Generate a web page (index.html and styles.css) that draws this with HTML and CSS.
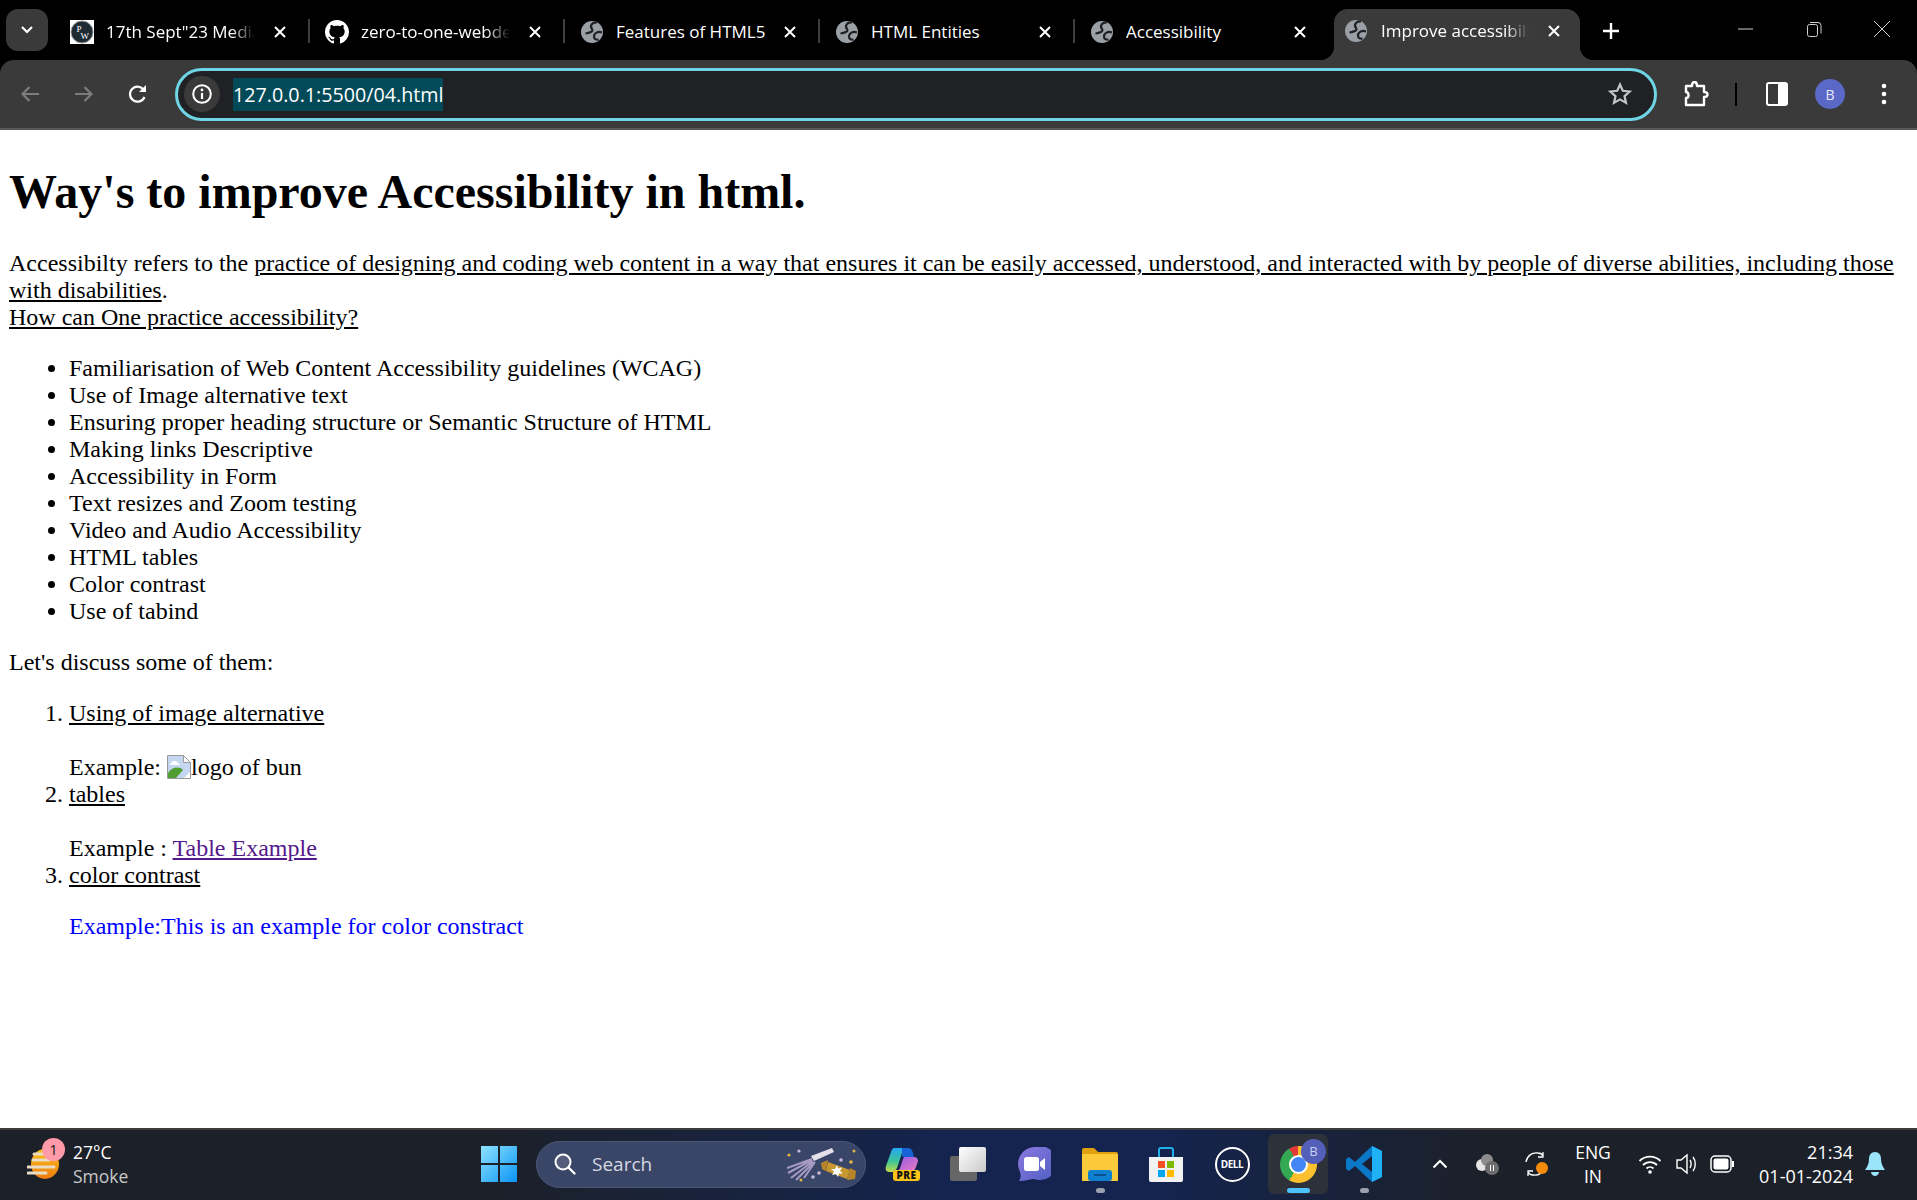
FILE: index.html
```html
<!DOCTYPE html>
<html lang="en">
<head>
    <meta charset="UTF-8">
    <title>Improve accessibility</title>
    <link rel="stylesheet" href="styles.css">
</head>
<body>
    <svg class="defs" width="0" height="0">
        <symbol id="globe" viewBox="0 0 24 24">
            <circle cx="12" cy="12" r="11" fill="#9aa0a6"/>
            <path d="M17 2.500C12 2 9.500 6 12 9c2 2.500-3 4-6.500 4.500M22 12.500c-4-1.500-8 .5-8 4 0 2.500 2 3.500 4.500 3" stroke="#202124" stroke-width="2.200" fill="none"/>
        </symbol>
        <symbol id="close" viewBox="0 0 14 14">
            <path d="M2 2l10 10M12 2L2 12" stroke="#fff" stroke-width="2" fill="none"/>
        </symbol>
    </svg>

    <div class="window">
        <div class="tabstrip">
            <div class="tab-search">
                <svg width="14" height="10" viewBox="0 0 14 10"><path d="M2 2l5 5 5-5" stroke="#fff" stroke-width="2.2" fill="none"/></svg>
            </div>

            <div class="tab">
                <span class="favicon pw"><svg width="24" height="24" viewBox="0 0 24 24"><circle cx="12" cy="12" r="11" fill="#1f2b33" stroke="#9a9a9a"/><text x="6.500" y="12" class="pw-letter">P</text><text x="10.500" y="18.500" class="pw-letter">W</text></svg></span>
                <span class="tab-title fade">17th Sept"23 Media</span>
                <svg class="tab-close"><use href="#close"/></svg>
            </div>
            <div class="tab">
                <span class="favicon"><svg width="24" height="24" viewBox="0 0 16 16"><path fill="#fff" d="M8 0C3.580 0 0 3.580 0 8c0 3.540 2.290 6.530 5.470 7.590.4.070.55-.17.55-.38 0-.19-.01-.82-.01-1.490-2.010.37-2.530-.49-2.690-.94-.09-.23-.48-.94-.82-1.130-.28-.15-.68-.52-.01-.53.63-.01 1.080.58 1.230.82.72 1.210 1.870.87 2.330.66.070-.52.28-.87.51-1.070-1.780-.2-3.640-.89-3.640-3.950 0-.87.31-1.590.82-2.150-.08-.2-.36-1.020.08-2.120 0 0 .67-.21 2.200.82.64-.18 1.320-.27 2-.27s1.360.09 2 .27c1.530-1.040 2.200-.82 2.200-.82.44 1.100.16 1.920.08 2.120.51.56.82 1.270.82 2.150 0 3.070-1.870 3.750-3.650 3.950.29.25.54.73.54 1.480 0 1.070-.01 1.930-.01 2.200 0 .21.15.46.55.38A8.010 8.010 0 0016 8c0-4.420-3.580-8-8-8z"/></svg></span>
                <span class="tab-title fade">zero-to-one-webdev</span>
                <svg class="tab-close"><use href="#close"/></svg>
            </div>
            <div class="tab">
                <span class="favicon"><svg width="24" height="24"><use href="#globe"/></svg></span>
                <span class="tab-title">Features of HTML5</span>
                <svg class="tab-close"><use href="#close"/></svg>
            </div>
            <div class="tab">
                <span class="favicon"><svg width="24" height="24"><use href="#globe"/></svg></span>
                <span class="tab-title">HTML Entities</span>
                <svg class="tab-close"><use href="#close"/></svg>
            </div>
            <div class="tab last">
                <span class="favicon"><svg width="24" height="24"><use href="#globe"/></svg></span>
                <span class="tab-title">Accessibility</span>
                <svg class="tab-close"><use href="#close"/></svg>
            </div>
            <div class="tab active">
                <span class="favicon"><svg width="24" height="24"><use href="#globe"/></svg></span>
                <span class="tab-title fade">Improve accessibility</span>
                <svg class="tab-close"><use href="#close"/></svg>
            </div>

            <svg class="new-tab" width="18" height="18" viewBox="0 0 18 18"><path d="M9 1v16M1 9h16" stroke="#fff" stroke-width="2.400"/></svg>

            <div class="window-controls">
                <svg width="16" height="16" viewBox="0 0 16 16"><path d="M0 8h15" stroke="#d0d0d0" stroke-width="1"/></svg>
                <svg width="16" height="16" viewBox="0 0 16 16"><rect x="1.500" y="3.500" width="10" height="12" rx="2" stroke="#d0d0d0" fill="none"/><path d="M4 1.500h8a3 3 0 013 3v8" stroke="#d0d0d0" fill="none"/></svg>
                <svg width="16" height="16" viewBox="0 0 16 16"><path d="M0 0l16 16M16 0L0 16" stroke="#d0d0d0"/></svg>
            </div>
        </div>

        <div class="toolbar">
            <svg class="nav-btn" width="20" height="18" viewBox="0 0 20 18"><path d="M19 9H3M9.500 2L2.500 9l7 7" stroke="#7c7c7c" stroke-width="2.200" fill="none"/></svg>
            <svg class="nav-btn" width="20" height="18" viewBox="0 0 20 18"><path d="M1 9h16M10.500 2l7 7-7 7" stroke="#7c7c7c" stroke-width="2.200" fill="none"/></svg>
            <svg class="nav-btn" width="20" height="20" viewBox="0 0 20 20"><path d="M16.500 13a7.500 7.500 0 11-.6-6.800" stroke="#fff" stroke-width="2.200" fill="none"/><path d="M18 1v7h-7z" fill="#fff"/></svg>

            <div class="omnibox">
                <div class="site-info">
                    <svg width="22" height="22" viewBox="0 0 22 22"><circle cx="11" cy="11" r="8.800" stroke="#fff" stroke-width="2" fill="none"/><path d="M11 10v6" stroke="#fff" stroke-width="2.200"/><circle cx="11" cy="7" r="1.400" fill="#fff"/></svg>
                </div>
                <span class="url">127.0.0.1:5500/04.html</span>
                <svg class="star" width="24" height="24" viewBox="0 0 24 24"><path d="M12 2.500l2.800 6.300 6.900.7-5.200 4.600 1.500 6.800-6-3.500-6 3.500 1.500-6.800-5.200-4.600 6.900-.7z" stroke="#c4c7c5" stroke-width="2.200" fill="none"/></svg>
            </div>

            <svg class="extensions" width="26" height="26" viewBox="0 0 26 26"><path d="M3 5h6c0-3 1-4 2.500-4S14 2 14 5h7v6c2 0 3.500 .5 3.500 2.500S23 16 21 16v8H3v-7c2 0 2.500-1 2.500-2.500S5 11 3 11z" stroke="#fff" stroke-width="2.400" fill="none" stroke-linejoin="round"/></svg>
            <span class="toolbar-sep"></span>
            <svg class="side-panel" width="22" height="24" viewBox="0 0 22 24"><rect x="1" y="1" width="20" height="22" rx="2" stroke="#fff" stroke-width="2" fill="none"/><rect x="12" y="1" width="9" height="22" fill="#fff"/></svg>
            <span class="avatar">B</span>
            <svg class="menu-dots" width="6" height="22" viewBox="0 0 6 22"><circle cx="3" cy="3" r="2.300" fill="#fff"/><circle cx="3" cy="11" r="2.300" fill="#fff"/><circle cx="3" cy="19" r="2.300" fill="#fff"/></svg>
        </div>

        <main class="page">
            <h1>Way's to improve Accessibility in html.</h1>
            <p>Accessibilty refers to the <u>practice of designing and coding web content in a way that ensures it can be easily accessed, understood, and interacted with by people of diverse abilities, including those with disabilities</u>.<br>
            <u>How can One practice accessibility?</u></p>
            <ul>
                <li>Familiarisation of Web Content Accessibility guidelines (WCAG)</li>
                <li>Use of Image alternative text</li>
                <li>Ensuring proper heading structure or Semantic Structure of HTML</li>
                <li>Making links Descriptive</li>
                <li>Accessibility in Form</li>
                <li>Text resizes and Zoom testing</li>
                <li>Video and Audio Accessibility</li>
                <li>HTML tables</li>
                <li>Color contrast</li>
                <li>Use of tabind</li>
            </ul>
            <p>Let's discuss some of them:</p>
            <ol>
                <li><u>Using of image alternative</u><br><br>
                    Example: <svg class="broken-img" width="24" height="24" viewBox="0 0 24 24">
                        <path d="M.5.500h16l7 7v16H.5z" fill="#c5d6f0" stroke="#9a9a9a"/>
                        <path d="M16.500.500v7h7z" fill="#fff" stroke="#9a9a9a"/>
                        <path d="M4 8c1-3 5-3 7 0 1 1 2 2 3 2H3z" fill="#fff"/>
                        <path d="M1 23v-5c4-6 11-7 15-3l-7 8z" fill="#4f9e2f"/>
                        <path d="M17 23l6-6v6z" fill="#fff"/>
                    </svg>logo of bun</li>
                <li><u>tables</u><br><br>
                    Example : <a class="visited" href="#">Table Example</a></li>
                <li><u>color contrast</u>
                    <p class="contrast">Example:This is an example for color constract</p></li>
            </ol>
        </main>

        <footer class="taskbar">
            <div class="weather">
                <div class="weather-icon">
                    <svg width="32" height="30" viewBox="0 0 32 30"><defs><linearGradient id="sun" x1="0" y1="0" x2="0" y2="1"><stop offset="0" stop-color="#fcc419"/><stop offset="1" stop-color="#ec7a10"/></linearGradient></defs><ellipse cx="18" cy="15" rx="14" ry="15" fill="url(#sun)"/><path d="M6 11h16M1 18h26M1 24h18M7 5h20" stroke="#e9dcc4" stroke-width="3" stroke-linecap="round"/></svg>
                    <span class="weather-badge">1</span>
                </div>
                <div class="weather-text">
                    <span>27°C</span>
                    <span class="weather-sub">Smoke</span>
                </div>
            </div>

            <svg class="start" width="36" height="36" viewBox="0 0 36 36">
                <defs><linearGradient id="win" x1="0" y1="0" x2="1" y2="1"><stop offset="0" stop-color="#8fe3ff"/><stop offset="1" stop-color="#0a94f5"/></linearGradient></defs>
                <path d="M0 0h17v17H0zM19 0h17v17H19zM0 19h17v17H0zM19 19h17v17H19z" fill="url(#win)"/>
            </svg>

            <div class="search-pill">
                <svg width="24" height="24" viewBox="0 0 24 24"><circle cx="10" cy="10" r="7.500" stroke="#fff" stroke-width="2" fill="#ffffff22"/><path d="M15.500 15.500l6 6" stroke="#fff" stroke-width="2.400" stroke-linecap="round"/></svg>
                <span class="search-label">Search</span>
                <svg class="search-art" width="70" height="35" viewBox="0 0 70 35">
                    <path d="M24 9L45 1l2 4-20 9z" fill="#e4dfe8"/>
                    <path d="M25 12L0 21M25 13L1 26M26 14L4 31M27 15L9 33M28 15L17 31" stroke="#a79bc4" stroke-width="2"/>
                    <path d="M41 15l22 8-3 9-21-8z" fill="#c9972f"/>
                    <path d="M34 16l7-3-2 11-4-2zM63 21l6 3-1 8-8 1z" fill="#b8842a"/>
                    <path d="M50 18l1 3.500 4-1-2 3.500 3 2.500-4 0-1 3.500-2-3-4 1 2-3.500-3-2.500 4 0z" fill="#fff"/>
                    <circle cx="12" cy="4" r="1.600" fill="#c8bcdc"/><circle cx="2" cy="8" r="1.600" fill="#e1b647"/><circle cx="67" cy="4" r="1.500" fill="#e1b647"/><circle cx="54" cy="13" r="1.800" fill="#c8bcdc"/><circle cx="64" cy="15" r="1.800" fill="#e1b647"/><circle cx="26" cy="30" r="1.800" fill="#c8bcdc"/><circle cx="32" cy="26" r="1.800" fill="#c8bcdc"/><circle cx="14" cy="33" r="1.500" fill="#e1b647"/>
                </svg>
            </div>

            <div class="apps">
                <div class="app">
                    <svg width="34" height="34" viewBox="0 0 34 34">
                        <defs>
                            <linearGradient id="cop" x1="0" y1="0" x2="0" y2="1"><stop offset="0" stop-color="#27a6f2"/><stop offset=".55" stop-color="#3cc49a"/><stop offset="1" stop-color="#c4dc46"/></linearGradient>
                            <linearGradient id="cop2" x1="0" y1="0" x2="1" y2="1"><stop offset="0" stop-color="#8f5be8"/><stop offset="1" stop-color="#f07bc0"/></linearGradient>
                        </defs>
                        <path d="M9 1h14c-3 0-5 2-6 5l-5 15c-1 2-3 4-5 4H4c-3 0-4-3-3-6L6 5c1-3 2-4 3-4z" fill="url(#cop)"/>
                        <path d="M17 1h6c3 0 4 2 5 5l1 5h-8c-2 0-4-1-4-3z" fill="#1763d6"/>
                        <path d="M20 10h9c3 0 4 2 4 4l-2 6c-1 3-3 5-6 5H11c2 0 3-2 4-4l3-9c.5-1 1-2 2-2z" fill="url(#cop2)"/>
                    </svg>
                    <span class="pre-label">PRE</span>
                </div>
                <div class="app"><svg width="36" height="34" viewBox="0 0 36 34"><defs><linearGradient id="tv" x1="0" y1="0" x2="1" y2="1"><stop offset="0" stop-color="#fff"/><stop offset="1" stop-color="#c9c9c9"/></linearGradient></defs><rect x="0" y="9" width="27" height="25" rx="2" fill="#666"/><rect x="9" y="0" width="27" height="25" rx="2" fill="url(#tv)"/></svg></div>
                <div class="app"><svg width="34" height="34" viewBox="0 0 34 34"><defs><linearGradient id="meet" x1="0" y1="0" x2="1" y2="1"><stop offset="0" stop-color="#8d78e0"/><stop offset="1" stop-color="#4d5fc2"/></linearGradient></defs><path d="M17 0a17 17 0 110 32c-3 0-8 2-15 2 2-3 2-6 1-9A17 17 0 0117 0z" fill="url(#meet)"/><rect x="7" y="10" width="15" height="14" rx="2.500" fill="#fff"/><path d="M23 15l5-4v12l-5-4z" fill="#fff"/></svg></div>
                <div class="app">
                    <svg width="36" height="33" viewBox="0 0 36 33"><path d="M0 2a2 2 0 012-2h10l4 4h18a2 2 0 012 2v4H0z" fill="#e0a010"/><path d="M0 6h36v27H0z" fill="#fcc93b"/><rect x="6" y="22" width="24" height="11" rx="3" fill="#0f7fd0"/><path d="M12 27h12" stroke="#0a4f90" stroke-width="2"/></svg>
                    <span class="app-dot"></span>
                </div>
                <div class="app"><svg width="36" height="36" viewBox="0 0 36 36"><path d="M1 11h34v23a2 2 0 01-2 2H3a2 2 0 01-2-2z" fill="#f2f2f2"/><path d="M11 11V4a2 2 0 012-2h10a2 2 0 012 2v7" stroke="#1fb0e8" stroke-width="2" fill="none"/><path d="M10 15h7v7h-7z" fill="#f25022"/><path d="M19 15h7v7h-7z" fill="#7fba00"/><path d="M10 24h7v7h-7z" fill="#00a4ef"/><path d="M19 24h7v7h-7z" fill="#ffb900"/></svg></div>
                <div class="app"><div class="dell">DELL</div></div>
                <div class="app current">
                    <div class="chrome-logo"><span class="chrome-core"></span></div>
                    <span class="chrome-badge">B</span>
                    <span class="app-bar"></span>
                </div>
                <div class="app">
                    <svg width="36" height="36" viewBox="0 0 36 36"><path d="M26 0L9 16l-6-5-3 2v10l3 2 6-5 17 16 10-5V5z" fill="#0a78c8"/><path d="M26 0l10 5v26l-10 5z" fill="#1fb0f5"/><path d="M26 10l-10 8 10 8z" fill="#1b2030"/></svg>
                    <span class="app-dot"></span>
                </div>
            </div>

            <div class="tray">
                <svg class="tray-chevron" width="16" height="10" viewBox="0 0 16 10"><path d="M1.500 8.500L8 2l6.500 6.500" stroke="#fff" stroke-width="2" fill="none"/></svg>
                <svg class="tray-cloud" width="26" height="22" viewBox="0 0 26 22"><circle cx="8" cy="12" r="6" fill="#e6e6e6"/><circle cx="13" cy="7" r="6" fill="#8c8c8c"/><circle cx="18" cy="15" r="7" fill="#6e6e6e"/><path d="M16.500 12v6M19.500 12v6" stroke="#fff"/></svg>
                <svg class="tray-sync" width="26" height="26" viewBox="0 0 26 26"><path d="M3 11C4 5 9 1 15 2c2 0 4 1 5 3M20 1v5h-5M22 15c-1 6-6 10-12 9-2 0-4-1-5-3M5 25v-5h5" stroke="#fff" stroke-width="1.300" fill="none"/><circle cx="19" cy="17" r="6" fill="#f58a0b"/></svg>
                <div class="tray-lang"><span>ENG</span><span>IN</span></div>
                <svg class="tray-wifi" width="24" height="20" viewBox="0 0 24 20"><path d="M1.500 7a15 15 0 0121 0M5 11a10 10 0 0114 0M8.500 14.500a5 5 0 017 0" stroke="#fff" stroke-width="1.800" fill="none"/><circle cx="12" cy="18" r="1.800" fill="#fff"/></svg>
                <svg class="tray-volume" width="24" height="24" viewBox="0 0 24 24"><path d="M2 8h4l6-5v18l-6-5H2z" stroke="#fff" stroke-width="1.400" fill="none"/><path d="M15 8c1.500 2 1.500 6 0 8M18 5c3 4 3 10 0 14" stroke="#fff" stroke-width="1.400" fill="none"/></svg>
                <svg class="tray-battery" width="24" height="18" viewBox="0 0 24 18"><rect x="1" y="1" width="20" height="16" rx="4" stroke="#fff" stroke-width="1.500" fill="none"/><rect x="3.500" y="3.500" width="15" height="11" rx="2" fill="#fff"/><rect x="22" y="6" width="2" height="6" fill="#fff"/></svg>
                <div class="tray-clock"><span>21:34</span><span>01-01-2024</span></div>
                <svg class="tray-bell" width="20" height="26" viewBox="0 0 20 26"><path d="M10 1c4 0 6 3 6 7 0 5 2 8 4 11H0c2-3 4-6 4-11 0-4 2-7 6-7z" fill="#9be5fb"/><path d="M6 21h8c0 2-2 4-4 4s-4-2-4-4z" fill="#9be5fb"/></svg>
            </div>
        </footer>
    </div>
</body>
</html>
```

FILE: styles.css
```css
body {
    margin: 0;
    overflow: hidden;
}

.defs {
    display: none;
}

.window {
    display: flex;
    flex-direction: column;
    height: 100vh;
    background-color: #000000;
}

/* tab strip */
.tabstrip {
    display: flex;
    align-items: flex-start;
    height: 60px;
    background-color: #000000;
    font-family: "Open Sans", sans-serif;
    color: #ffffff;
    flex-shrink: 0;
}

.tab-search {
    display: flex;
    justify-content: center;
    align-items: center;
    width: 42px;
    height: 42px;
    margin: 9px 7px 0 6px;
    background-color: #3a3a3a;
    border-radius: 12px;
}

.tab {
    position: relative;
    display: flex;
    align-items: center;
    width: 255px;
    height: 43px;
    margin-top: 10px;
    padding: 0 23px 0 15px;
    box-sizing: border-box;
    font-size: 17px;
}

.tab::after {
    content: "";
    position: absolute;
    right: 0;
    top: 9px;
    width: 2px;
    height: 24px;
    background-color: #3f3f3f;
}

.tab.last::after {
    display: none;
}

.tab.active {
    width: 246px;
    height: 51px;
    margin-left: 4px;
    margin-top: 9px;
    padding: 0 19px 8px 10px;
    background-color: #3a3a3a;
    border-radius: 14px 14px 0 0;
}

.tab.active::before,
.tab.active::after {
    content: "";
    position: absolute;
    top: auto;
    bottom: 0;
    width: 14px;
    height: 14px;
}

.tab.active::before {
    left: -14px;
    background: radial-gradient(circle at 0 0, transparent 14px, #3a3a3a 14.5px);
}

.tab.active::after {
    right: -14px;
    background: radial-gradient(circle at 100% 0, transparent 14px, #3a3a3a 14.5px);
}

.favicon {
    display: flex;
    width: 24px;
    height: 24px;
    flex-shrink: 0;
}

.pw {
    background-color: #ffffff;
}

.pw-letter {
    font-family: "Liberation Serif", serif;
    font-size: 9px;
    fill: #ffffff;
}

.tab-title {
    flex: 1;
    min-width: 0;
    margin-left: 12px;
    white-space: nowrap;
    overflow: hidden;
}

.tab-title.fade {
    -webkit-mask-image: linear-gradient(to right, #000 84%, transparent 100%);
    mask-image: linear-gradient(to right, #000 84%, transparent 100%);
}

.tab.active .tab-title {
    margin-left: 13px;
}

.tab-close {
    width: 14px;
    height: 14px;
    margin-left: 18px;
    flex-shrink: 0;
}

.new-tab {
    margin: 22px 0 0 22px;
}

.window-controls {
    display: flex;
    gap: 52px;
    margin: 21px 0 0 118px;
}

/* toolbar */
.toolbar {
    display: flex;
    align-items: center;
    height: 70px;
    background-color: #3a3a3a;
    border-bottom: 2px solid #5a5a5a;
    border-radius: 14px 14px 0 0;
    box-sizing: border-box;
    flex-shrink: 0;
    font-family: "Open Sans", sans-serif;
}

.nav-btn {
    margin-left: 34px;
}

.nav-btn:first-child {
    margin-left: 20px;
}

.omnibox {
    display: flex;
    align-items: center;
    width: 1482px;
    height: 53px;
    margin-left: 27px;
    padding: 0 22px 0 6px;
    background-color: #202124;
    border: 3px solid #6fd5e6;
    border-radius: 27px;
    box-sizing: border-box;
    color: #ffffff;
}

.site-info {
    display: flex;
    justify-content: center;
    align-items: center;
    width: 36px;
    height: 36px;
    background-color: #3a3a3a;
    border-radius: 50%;
    flex-shrink: 0;
}

.url {
    margin-left: 13px;
    padding: 2px 0;
    background-color: #024a58;
    font-size: 19.7px;
    line-height: 29px;
}

.star {
    margin-left: auto;
}

.extensions {
    margin-left: 26px;
}

.toolbar-sep {
    width: 2px;
    height: 23px;
    margin-left: 26px;
    background-color: #000000;
}

.side-panel {
    margin-left: 29px;
}

.avatar {
    display: flex;
    justify-content: center;
    align-items: center;
    width: 30px;
    height: 30px;
    margin-left: 27px;
    background-color: #5a68c7;
    border-radius: 50%;
    color: #e8eaf6;
    font-size: 14px;
}

.menu-dots {
    margin-left: 36px;
}

/* page content */
.page {
    flex: 1;
    padding: 2px 9px;
    background-color: #ffffff;
    font-family: "Liberation Serif", serif;
    font-size: 24px;
    color: #000000;
    overflow: hidden;
}

.page h1 {
    margin: 32px 0 31px;
    font-size: 48px;
}

.page p {
    margin: 24px 0;
}

.page ul,
.page ol {
    margin: 24px 0;
    padding-left: 60px;
}

.visited {
    color: #551a8b;
}

.contrast {
    color: #0000ff;
}

.broken-img {
    vertical-align: -4px;
}

/* taskbar */
.taskbar {
    display: flex;
    align-items: center;
    height: 72px;
    padding-bottom: 2px;
    border-top: 2px solid #3c3c3c;
    box-sizing: border-box;
    background: linear-gradient(to right, #1c2028 0, #1c2028 25%, #14244f 50%, #14244f 60%, #1c2028 78%, #1c2028 100%);
    font-family: "Open Sans", sans-serif;
    color: #ffffff;
    flex-shrink: 0;
}

.weather {
    display: flex;
    align-items: center;
    width: 481px;
    padding-left: 27px;
    box-sizing: border-box;
    flex-shrink: 0;
}

.weather-icon {
    position: relative;
    width: 32px;
    height: 30px;
}

.weather-badge {
    position: absolute;
    left: 15px;
    top: -11px;
    width: 23px;
    height: 23px;
    background-color: #ff9aa8;
    border-radius: 50%;
    color: #222222;
    font-size: 15px;
    line-height: 23px;
    text-align: center;
}

.weather-text {
    display: flex;
    flex-direction: column;
    margin-left: 14px;
    font-size: 17.5px;
    line-height: 24px;
}

.weather-sub {
    color: #c8c8c8;
}

.start {
    flex-shrink: 0;
}

.search-pill {
    display: flex;
    align-items: center;
    width: 330px;
    height: 47px;
    margin-left: 19px;
    padding: 0 8px 0 16px;
    background-color: #3a4668;
    border: 1px solid #4d5877;
    border-radius: 24px;
    box-sizing: border-box;
    flex-shrink: 0;
}

.search-label {
    margin-left: 15px;
    font-size: 19px;
    color: #d6d9e0;
}

.search-art {
    margin-left: auto;
}

.apps {
    display: flex;
    margin-left: 3px;
    flex-shrink: 0;
}

.app {
    position: relative;
    display: flex;
    justify-content: center;
    align-items: center;
    width: 66px;
    height: 60px;
}

.current {
    width: 60px;
    margin: 0 3px;
    background-color: #2c313a;
    border-radius: 6px;
}

.app-dot {
    position: absolute;
    left: 50%;
    bottom: 1px;
    width: 9px;
    height: 5px;
    margin-left: -4px;
    background-color: #9aa0ad;
    border-radius: 3px;
}

.app-bar {
    position: absolute;
    left: 19px;
    bottom: 1px;
    width: 23px;
    height: 5px;
    background-color: #4cc2ff;
    border-radius: 3px;
}

.pre-label {
    position: absolute;
    left: 24px;
    top: 36px;
    width: 27px;
    height: 11px;
    background-color: #fcc419;
    border-radius: 3px;
    font-size: 10px;
    font-weight: 800;
    line-height: 11px;
    letter-spacing: 0.5px;
    color: #111111;
    text-align: center;
}

.dell {
    width: 31px;
    height: 31px;
    border: 2px solid #ffffff;
    border-radius: 50%;
    font-size: 10px;
    font-weight: 700;
    line-height: 31px;
    text-align: center;
    letter-spacing: -0.5px;
}

.chrome-logo {
    display: flex;
    justify-content: center;
    align-items: center;
    width: 37px;
    height: 37px;
    background: conic-gradient(#fbc02d 90deg, #fbc02d 210deg, #34a853 210deg, #34a853 330deg, #e53935 330deg);
    border-radius: 50%;
}

.chrome-core {
    width: 15px;
    height: 15px;
    background-color: #4285f4;
    border: 2.5px solid #ffffff;
    border-radius: 50%;
}

.chrome-badge {
    position: absolute;
    right: 2px;
    top: 5px;
    width: 25px;
    height: 25px;
    background-color: #535fb8;
    border-radius: 50%;
    color: #c9cdf0;
    font-size: 13px;
    line-height: 25px;
    text-align: center;
}

.tray {
    display: flex;
    align-items: center;
    flex: 1;
    min-width: 0;
}

.tray-chevron {
    margin-left: 35px;
}

.tray-cloud {
    margin-left: 26px;
}

.tray-sync {
    margin-left: 23px;
}

.tray-lang {
    display: flex;
    flex-direction: column;
    align-items: center;
    width: 40px;
    margin-left: 24px;
    font-size: 17.5px;
    line-height: 24px;
}

.tray-wifi {
    margin-left: 25px;
}

.tray-volume {
    margin-left: 13px;
}

.tray-battery {
    margin-left: 11px;
}

.tray-clock {
    display: flex;
    flex-direction: column;
    align-items: flex-end;
    width: 110px;
    margin-left: 9px;
    font-size: 18px;
    line-height: 24px;
}

.tray-bell {
    margin-left: 12px;
}
```
